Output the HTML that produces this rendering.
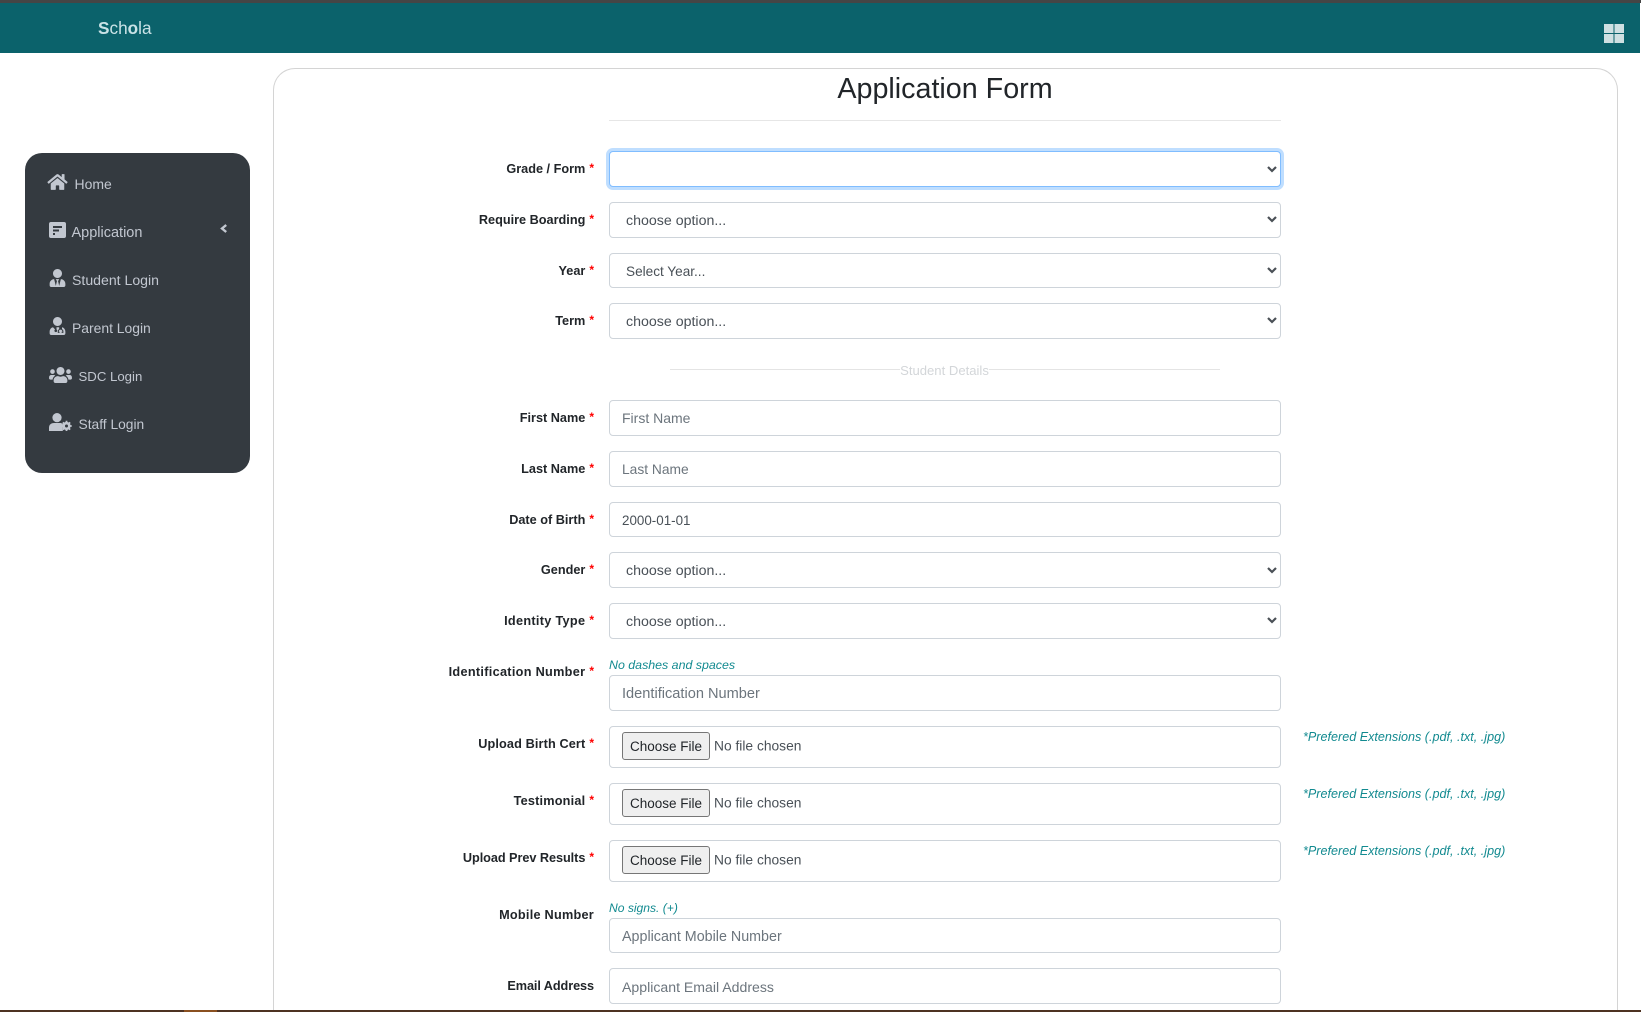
<!DOCTYPE html>
<html lang="en"><head><meta charset="utf-8"><title>Application Form</title>
<style>
*{box-sizing:border-box}
html,body{margin:0;padding:0;width:1641px;height:1012px;overflow:hidden;background:#fff;font-family:"Liberation Sans",sans-serif;color:#212529}
#wrap{position:absolute;left:0;top:0;width:1641px;height:1012px;overflow:hidden;background:#fff}
.topline{position:absolute;left:0;top:0;width:1641px;height:3px;background:#454545}
.nav{position:absolute;left:0;top:3px;width:1640px;height:50px;background:#0b626b}
.brand{position:absolute;left:98px;top:15px;line-height:20px;font-size:17.2px;color:#c9e2e6}
.brand b{font-weight:bold}
.grid{position:absolute;left:1604px;top:24px}
.panel{position:absolute;left:273px;top:68px;width:1345px;height:942px;border:1px solid #d4d4d4;border-bottom:0;border-radius:22px 22px 0 0}
h1{position:absolute;left:609px;width:672px;top:71px;margin:0;text-align:center;font-weight:normal;font-size:28.7px;line-height:36px;color:#212529}
.hr{position:absolute;left:609px;width:672px;top:120px;height:1px;background:#e6e6e6}
.side{position:absolute;left:25px;top:153px;width:225px;height:320px;background:#343a40;border-radius:17px}
.mi{position:absolute;font-size:14px;line-height:20px;color:#c2c7d0;white-space:nowrap}
.ic{position:absolute;fill:#c2c7d0}
.l{position:absolute;right:1047px;font-size:12.7px;font-weight:bold;line-height:20px;height:20px;white-space:nowrap;color:#212529}
.l i{font-style:normal;color:#f00;margin-left:4px;font-size:12px;position:relative;top:-1px;letter-spacing:0}
.f{position:absolute;left:609px;width:672px;border:1px solid #ced4da;border-radius:4px;background:#fff;margin:0;outline:0;font-family:"Liberation Sans",sans-serif;color:#495057}
select.f{appearance:none;-webkit-appearance:none;font-size:14.2px;padding:2px 0 0 16px}
input.f{font-size:14.1px;padding:2px 12px 0}
input.f::placeholder{color:#6c757d;opacity:1}
input[type=file].f{font-size:13.8px;padding:5px 12px;height:42px}
input[type=file].f::file-selector-button{font-family:"Liberation Sans",sans-serif;font-size:13.5px;height:28px;width:88px;padding:0;margin:0 4px 0 0;background:#efefef;border:1px solid #767676;border-radius:3px;color:#212529}
.focus{border-color:#80bdff;box-shadow:0 0 0 3px rgba(0,123,255,.25)}
.chev{position:absolute;left:1267px;width:10px;height:7px;fill:none;stroke:#4a5056;stroke-width:2.2}
.hint{position:absolute;font-style:italic;line-height:16px;color:#128a90;white-space:nowrap}
.dv{position:absolute;height:1px;background:#e4e4e4;top:369px}
.dt{position:absolute;left:900px;width:89px;top:362px;line-height:18px;font-size:13.1px;text-align:center;color:#d3d6d9;white-space:nowrap}
.bot{position:absolute;left:0;top:1010px;width:1641px;height:2px;background:#4d3222}
.bot2{position:absolute;left:184px;top:1010px;width:33px;height:2px;background:#8a5020}
</style></head><body>
<div id="wrap">
<div class="topline"></div>
<div class="nav"><div class="brand"><b>S</b>ch<b>o</b>la</div></div>
<svg class="grid" width="20" height="19" viewBox="0 0 20 19"><g fill="#cfe0e2"><rect x="0" y="0" width="9.5" height="9"/><rect x="10.5" y="0" width="9.5" height="9"/><rect x="0" y="10" width="9.5" height="9"/><rect x="10.5" y="10" width="9.5" height="9"/></g></svg>

<div class="panel"></div>
<h1>Application Form</h1>
<div class="hr"></div>

<div class="side"></div>
<svg class="ic" style="left:47px;top:173px" width="21" height="18" viewBox="0 0 576 512"><path d="M280.37 148.26L96 300.11V464a16 16 0 0 0 16 16l112.06-.29a16 16 0 0 0 15.92-16V368a16 16 0 0 1 16-16h64a16 16 0 0 1 16 16v95.64a16 16 0 0 0 16 16.05L464 480a16 16 0 0 0 16-16V300L295.67 148.26a12.19 12.19 0 0 0-15.3 0zM571.6 251.47L488 182.56V44.05a12 12 0 0 0-12-12h-56a12 12 0 0 0-12 12v72.61L318.47 43a48 48 0 0 0-61 0L4.34 251.47a12 12 0 0 0-1.6 16.9l25.5 31A12 12 0 0 0 45.15 301l235.22-193.74a12.19 12.19 0 0 1 15.3 0L530.9 301a12 12 0 0 0 16.9-1.6l25.5-31a12 12 0 0 0-1.7-16.93z"/></svg>
<div class="mi" style="left:74.5px;top:174px">Home</div>

<svg class="ic" style="left:49px;top:222px" width="17" height="16" viewBox="0 0 17 16"><path fill-rule="evenodd" d="M2 0h13a2 2 0 0 1 2 2v12a2 2 0 0 1-2 2H2a2 2 0 0 1-2-2V2a2 2 0 0 1 2-2zM4 4v2h9V4zM4 7.5v2h6v-2zM4 11v2h2v-2z"/></svg>
<div class="mi" style="left:71.5px;top:223px;font-size:14.5px">Application</div>
<svg style="position:absolute;left:220px;top:224px" width="8" height="9" viewBox="0 0 8 9"><path d="M6.2 1L2 4.5L6.2 8" fill="none" stroke="#c2c7d0" stroke-width="2.4"/></svg>

<svg class="ic" style="left:49px;top:269px" width="17" height="18" viewBox="0 0 448 512"><path d="M224 256c70.7 0 128-57.3 128-128S294.7 0 224 0 96 57.3 96 128s57.3 128 128 128zm95.8 32.6L272 480l-32-136 32-56h-96l32 56-32 136-47.8-191.4C56.9 292 0 350.3 0 422.4V464c0 26.5 21.5 48 48 48h352c26.5 0 48-21.5 48-48v-41.6c0-72.1-56.9-130.4-128.2-133.8z"/></svg>
<div class="mi" style="left:72px;top:270px;font-size:14.1px">Student Login</div>

<svg class="ic" style="left:49px;top:317px" width="17" height="18" viewBox="0 0 448 512"><path d="M224 256c70.7 0 128-57.3 128-128S294.7 0 224 0 96 57.3 96 128s57.3 128 128 128z"/><path d="M96 290C40 302 0 352 0 422v42c0 26.5 21.5 48 48 48h352c26.5 0 48-21.5 48-48v-42c0-70-40-120-96-132v60c26 8 40 30 40 60v40h-50v-30h20v-10c0-30-25-50-50-50s-50 20-50 50v10h20v30h-50v-40c0-30 14-52 40-60v-60h-76v66a40 40 0 1 1-40 0z"/></svg>
<div class="mi" style="left:72px;top:318px;font-size:13.9px">Parent Login</div>

<svg class="ic" style="left:49px;top:367px" width="23" height="16" viewBox="0 32 640 448"><path d="M96 224c35.3 0 64-28.7 64-64s-28.7-64-64-64-64 28.7-64 64 28.7 64 64 64zm448 0c35.3 0 64-28.7 64-64s-28.7-64-64-64-64 28.7-64 64 28.7 64 64 64zm32 32h-64c-17.6 0-33.5 7.1-45.1 18.6 40.3 22.1 68.9 62 75.1 109.4h66c17.7 0 32-14.3 32-32v-32c0-35.3-28.7-64-64-64zm-256 0c61.9 0 112-50.1 112-112S381.9 32 320 32 208 82.1 208 144s50.1 112 112 112zm76.8 32h-8.3c-20.8 10-43.9 16-68.5 16s-47.6-6-68.5-16h-8.3C179.6 288 128 339.6 128 403.2V432c0 26.5 21.5 48 48 48h288c26.5 0 48-21.5 48-48v-28.8c0-63.6-51.6-115.2-115.2-115.2zm-223.7-13.4C161.5 263.1 145.6 256 128 256H64c-35.3 0-64 28.7-64 64v32c0 17.7 14.3 32 32 32h65.9c6.3-47.4 34.9-87.3 75.2-109.4z"/></svg>
<div class="mi" style="left:78.5px;top:367px;font-size:13.2px">SDC Login</div>

<svg class="ic" style="left:49px;top:413px" width="23" height="18" viewBox="0 0 23 18"><circle cx="8" cy="4.6" r="4.6"/><path d="M0 18v-3.5C0 11.5 2.5 10 5 10h6c1 0 2 .3 2.8.8V18z"/><circle cx="17.5" cy="13" r="4.1"/><g stroke="#c2c7d0" stroke-width="1.8"><path d="M17.5 7.8v10.4M12.3 13h10.4M13.9 9.4l7.2 7.2M21.1 9.4l-7.2 7.2"/></g><circle cx="17.5" cy="13" r="1.5" fill="#343a40"/></svg>
<div class="mi" style="left:78.5px;top:415px;font-size:13.8px">Staff Login</div>

<div class="l" style="top:159px">Grade / Form<i>*</i></div>
<select class="f focus" style="top:151px;height:36px"><option></option></select>
<svg class="chev" style="top:166px" viewBox="0 0 10 7"><path d="M1 1l4 4 4-4"/></svg>

<div class="l" style="top:210px">Require Boarding<i>*</i></div>
<select class="f" style="top:202px;height:36px"><option>choose option...</option></select>
<svg class="chev" style="top:216px" viewBox="0 0 10 7"><path d="M1 1l4 4 4-4"/></svg>

<div class="l" style="top:261px">Year<i>*</i></div>
<select class="f" style="top:253px;height:35px;font-size:13.6px"><option>Select Year...</option></select>
<svg class="chev" style="top:267px" viewBox="0 0 10 7"><path d="M1 1l4 4 4-4"/></svg>

<div class="l" style="top:311px">Term<i>*</i></div>
<select class="f" style="top:303px;height:36px"><option>choose option...</option></select>
<svg class="chev" style="top:317px" viewBox="0 0 10 7"><path d="M1 1l4 4 4-4"/></svg>

<div class="dv" style="left:670px;width:230px"></div>
<div class="dt">Student Details</div>
<div class="dv" style="left:989px;width:231px"></div>

<div class="l" style="top:408px">First Name<i>*</i></div>
<input class="f" style="top:400px;height:36px;font-size:14px;padding-top:0" placeholder="First Name">

<div class="l" style="top:459px">Last Name<i>*</i></div>
<input class="f" style="top:451px;height:36px;font-size:13.8px;padding-top:0" placeholder="Last Name">

<div class="l" style="top:510px">Date of Birth<i>*</i></div>
<input class="f" style="top:502px;height:35px;font-size:13.4px" value="2000-01-01">

<div class="l" style="top:560px">Gender<i>*</i></div>
<select class="f" style="top:552px;height:36px"><option>choose option...</option></select>
<svg class="chev" style="top:567px" viewBox="0 0 10 7"><path d="M1 1l4 4 4-4"/></svg>

<div class="l" style="top:611px;letter-spacing:.3px">Identity Type<i>*</i></div>
<select class="f" style="top:603px;height:36px"><option>choose option...</option></select>
<svg class="chev" style="top:617px" viewBox="0 0 10 7"><path d="M1 1l4 4 4-4"/></svg>

<div class="l" style="top:662px;letter-spacing:.3px">Identification Number<i>*</i></div>
<div class="hint" style="left:609px;top:657px;font-size:12.4px">No dashes and spaces</div>
<input class="f" style="top:675px;height:36px;font-size:14.6px" placeholder="Identification Number">

<div class="l" style="top:734px;letter-spacing:.12px">Upload Birth Cert<i>*</i></div>
<input class="f" type="file" style="top:726px">
<div class="hint" style="left:1303px;top:729px;font-size:12.6px">*Prefered Extensions (.pdf, .txt, .jpg)</div>

<div class="l" style="top:791px;letter-spacing:.2px">Testimonial<i>*</i></div>
<input class="f" type="file" style="top:783px">
<div class="hint" style="left:1303px;top:786px;font-size:12.6px">*Prefered Extensions (.pdf, .txt, .jpg)</div>

<div class="l" style="top:848px;letter-spacing:-.05px">Upload Prev Results<i>*</i></div>
<input class="f" type="file" style="top:840px">
<div class="hint" style="left:1303px;top:843px;font-size:12.6px">*Prefered Extensions (.pdf, .txt, .jpg)</div>

<div class="l" style="top:905px;letter-spacing:.25px">Mobile Number</div>
<div class="hint" style="left:609px;top:900px;font-size:12.1px">No signs. (+)</div>
<input class="f" style="top:918px;height:35px;font-size:14.3px" placeholder="Applicant Mobile Number">

<div class="l" style="top:976px;letter-spacing:-.08px">Email Address</div>
<input class="f" style="top:968px;height:36px;font-size:14.1px" placeholder="Applicant Email Address">

<div class="bot"></div><div class="bot2"></div>
</div>
</body></html>
